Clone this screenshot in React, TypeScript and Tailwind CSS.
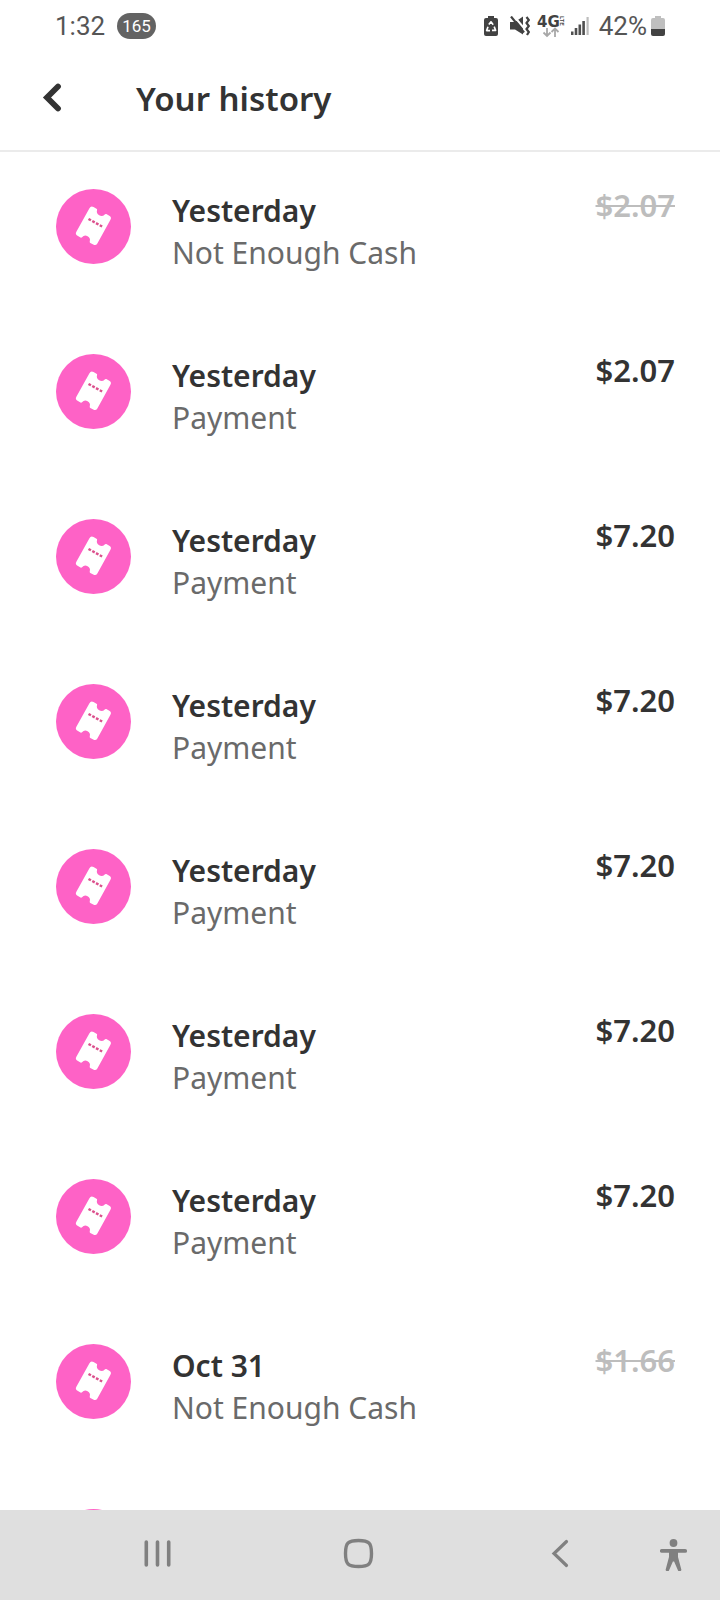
import React from 'react';
import clsx from 'clsx';

interface HistoryItem {
  id: number;
  date: string;
  status: string;
  amount: string;
  failed?: boolean;
}

const items: HistoryItem[] = [
  { id: 1, date: 'Yesterday', status: 'Not Enough Cash', amount: '$2.07', failed: true },
  { id: 2, date: 'Yesterday', status: 'Payment', amount: '$2.07' },
  { id: 3, date: 'Yesterday', status: 'Payment', amount: '$7.20' },
  { id: 4, date: 'Yesterday', status: 'Payment', amount: '$7.20' },
  { id: 5, date: 'Yesterday', status: 'Payment', amount: '$7.20' },
  { id: 6, date: 'Yesterday', status: 'Payment', amount: '$7.20' },
  { id: 7, date: 'Yesterday', status: 'Payment', amount: '$7.20' },
  { id: 8, date: 'Oct 31', status: 'Not Enough Cash', amount: '$1.66', failed: true },
];

const TicketIcon: React.FC = () => (
  <svg className="size-[75px] shrink-0" viewBox="0 0 75 75" aria-hidden="true">
    <circle cx="37.5" cy="37.5" r="37.5" fill="#fe62c6" />
    <g transform="translate(37.4 36.8) rotate(29)">
      <path
        d="M-9 -16.5 H-5.6 Q-4.6 -16.5 -4.4 -15.5 A4.5 4.5 0 0 0 4.4 -15.5 Q4.6 -16.5 5.6 -16.5 H9 Q12 -16.5 12 -13.5 V13.5 Q12 16.5 9 16.5 H5.6 Q4.6 16.5 4.4 15.5 A4.5 4.5 0 0 0 -4.4 15.5 Q-4.6 16.5 -5.6 16.5 H-9 Q-12 16.5 -12 13.5 V-13.5 Q-12 -16.5 -9 -16.5 Z"
        fill="#fff"
      />
      <path d="M-7.6 -3.6 H8" stroke="#dc4f8c" strokeWidth="2.4" strokeDasharray="2.8 1.5" />
    </g>
  </svg>
);

const StatusBar: React.FC = () => (
  <div className="flex h-12 items-center justify-between pt-1 pr-[55px] pl-[55px] font-['Roboto',sans-serif] text-[#555555]">
    <div className="flex items-center gap-3">
      <span className="text-[26px] leading-none">1:32</span>
      <span className="flex h-[26px] items-center rounded-full bg-[#636363] px-[5px] text-[17px] leading-none text-white">165</span>
    </div>
    <div className="flex items-center">
      {/* battery protection */}
      <svg className="mr-3 h-5 w-[14px]" viewBox="0 0 14 20" aria-hidden="true">
        <path d="M4 0 H10 V2 H12 Q14 2 14 4 V18 Q14 20 12 20 H2 Q0 20 0 18 V4 Q0 2 2 2 H4 Z" fill="#424242" />
        <path d="M4.8 8.6 L7 5.8 L9.2 8.8 M10.2 10.6 L11.6 14.4 H8 M6 14.6 H2.6 L4 10.8" fill="none" stroke="#fff" strokeWidth="1.6" strokeLinejoin="round" />
      </svg>
      {/* muted, vibrate */}
      <svg className="mr-[7px] h-5 w-5" viewBox="0 0 20 20" aria-hidden="true">
        <path d="M0 6 H5 L13 0.5 V18.5 L5 13.5 H0 Z" fill="#424242" />
        <path d="M3 -1 L16 14.5" stroke="#fff" strokeWidth="2" />
        <path d="M1 0.5 L14 16.5" stroke="#424242" strokeWidth="2.2" />
        <path d="M16.5 1 L18.8 4 L16.5 7 L18.8 10 L16.5 13 L18.8 16 L17 19" fill="none" stroke="#424242" strokeWidth="2.2" />
      </svg>
      {/* network type */}
      <svg className="mr-1 h-7 w-[30px]" viewBox="0 0 30 28" aria-hidden="true">
        <text x="0" y="15" fontSize="15" fontWeight="700" fontFamily="DejaVu Sans" fill="#424242">4G</text>
        <text transform="translate(23 4) rotate(90)" fontSize="6" fontWeight="700" fontFamily="Roboto" fill="#424242">LTE</text>
        <path d="M10 16 V24 M6.5 20.5 L10 24 L13.5 20.5 M18 25 V17 M14.5 20 L18 16.5 L21.5 20" fill="none" stroke="#a8a8a8" strokeWidth="1.8" />
      </svg>
      {/* signal */}
      <svg className="mr-[10px] h-5 w-[18px]" viewBox="0 0 18 20" aria-hidden="true">
        <path d="M1.2 19 V15.5 M5 19 V12 M8.8 19 V8.5 M12.6 19 V5" stroke="#505050" strokeWidth="2.6" />
        <path d="M16.6 19 V1" stroke="#bdbdbd" strokeWidth="2.2" />
      </svg>
      <span className="mr-1 text-[26px] leading-none">42%</span>
      {/* battery level */}
      <svg className="h-5 w-[14px]" viewBox="0 0 14 20" aria-hidden="true">
        <path d="M4 0 H10 V2 H12 Q14 2 14 4 V13 H0 V4 Q0 2 2 2 H4 Z" fill="#bfbfbf" />
        <path d="M0 13 H14 V18 Q14 20 12 20 H2 Q0 20 0 18 Z" fill="#424242" />
      </svg>
    </div>
  </div>
);

const HistoryRow: React.FC<{ item: HistoryItem }> = ({ item }) => (
  <li className="flex items-start">
    <TicketIcon />
    <div className="ml-[41px] flex-1 pt-px text-[30px] leading-[42px]">
      <p className="font-semibold">{item.date}</p>
      <p className="text-[#6a6a6a]">{item.status}</p>
    </div>
    <p
      className={clsx(
        'text-[31px] leading-8 font-semibold',
        item.failed && 'text-[#bdbdbd] line-through decoration-2'
      )}
    >
      {item.amount}
    </p>
  </li>
);

const NavBar: React.FC = () => (
  <nav className="flex h-[90px] shrink-0 items-center bg-[#dfdfdf] pr-8 pb-[2px] pl-14 text-[#808080]">
    <button className="flex h-full flex-1 items-center justify-center" aria-label="Recent apps">
      <svg className="size-8" viewBox="0 0 32 32" fill="none" stroke="currentColor" strokeWidth="3.6" strokeLinecap="round">
        <path d="M5.3 4 V27 M16.5 4 V27 M27.7 4 V27" />
      </svg>
    </button>
    <button className="flex h-full flex-1 items-center justify-center" aria-label="Home">
      <svg className="size-8" viewBox="0 0 32 32" fill="none" stroke="currentColor" strokeWidth="3.4">
        <path d="M16.5 2.5 C27 2.5 29.5 5 29.5 15.5 C29.5 26 27 28.5 16.5 28.5 C6 28.5 3.5 26 3.5 15.5 C3.5 5 6 2.5 16.5 2.5 Z" />
      </svg>
    </button>
    <button className="flex h-full flex-1 items-center justify-center" aria-label="Back">
      <svg className="size-8" viewBox="0 0 32 32" fill="none" stroke="currentColor" strokeWidth="3.2" strokeLinecap="round" strokeLinejoin="miter">
        <path d="M23.5 3.5 L11 15.5 L23.5 27.5" />
      </svg>
    </button>
    <button className="flex h-full items-center pt-[2px]" aria-label="Accessibility">
      <svg className="h-8 w-7" viewBox="0 0 28 32" fill="currentColor">
        <circle cx="13.5" cy="4" r="3.9" />
        <path d="M1.8 10 H25.2 A1.8 1.8 0 0 1 25.2 13.8 H18 V18 L21.2 30 A1.7 1.7 0 0 1 17.9 31.2 L14.1 22.5 H12.9 L9.1 31.2 A1.7 1.7 0 0 1 5.8 30 L9 18 V13.8 H1.8 A1.8 1.8 0 0 1 1.8 10 Z" />
      </svg>
    </button>
  </nav>
);

const App: React.FC = () => {
  return (
    <div className="flex h-screen flex-col bg-white font-['Noto_Sans',sans-serif] text-[#333333]">
      <StatusBar />
      <header className="flex h-[104px] shrink-0 items-center border-b-2 border-[#ebebeb] pb-[2px] pl-9">
        <button className="flex size-8 items-center justify-center" aria-label="Go back">
          <svg className="size-8" viewBox="0 0 32 32" fill="none" stroke="currentColor" strokeWidth="5.8" strokeLinecap="round">
            <path d="M22 4.5 L11 15.5 L22 26.5" />
          </svg>
        </button>
        <h1 className="ml-[68px] text-[33px] leading-none font-semibold">Your history</h1>
      </header>
      <main className="min-h-0 flex-1 overflow-hidden pt-[37px] pr-[45px] pl-14">
        <ul className="flex flex-col gap-20">
          {items.map((item) => (
            <HistoryRow key={item.id} item={item} />
          ))}
          <li>
            <TicketIcon />
          </li>
        </ul>
      </main>
      <NavBar />
    </div>
  );
};

export default App;
